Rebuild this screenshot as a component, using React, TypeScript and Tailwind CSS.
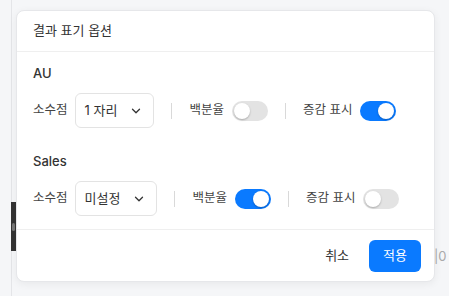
import React, { useState } from 'react';
import { ChevronDown } from 'lucide-react';

const FONT = 'font-[Inter,"Noto_Sans_CJK_KR",sans-serif]';

const Toggle: React.FC<{ on: boolean; onChange: () => void }> = ({ on, onChange }) => (
  <button
    onClick={onChange}
    className={`relative h-5 w-9 shrink-0 rounded-full transition-colors ${
      on ? 'bg-[#0a7aff]' : 'bg-[#e3e3e3]'
    }`}
  >
    <span
      className={`absolute top-[2px] h-4 w-4 rounded-full bg-white shadow-[0_1px_2px_rgba(0,0,0,0.25)] transition-all ${
        on ? 'left-[18px]' : 'left-[2px]'
      }`}
    />
  </button>
);

const Divider = () => <span className="mx-[17px] h-4 w-px bg-[#d9d9d9]" />;

interface RowState {
  name: string;
  decimal: string;
  percent: boolean;
  delta: boolean;
}

export default function App() {
  const [rows, setRows] = useState<RowState[]>([
    { name: 'AU', decimal: '1 자리', percent: false, delta: true },
    { name: 'Sales', decimal: '미설정', percent: true, delta: false },
  ]);

  const flip = (i: number, key: 'percent' | 'delta') =>
    setRows((prev) => prev.map((r, j) => (j === i ? { ...r, [key]: !r[key] } : r)));

  return (
    <div className={`relative h-[296px] w-[449px] overflow-hidden bg-[#f5f6f8] ${FONT}`}>
      {/* background page bits */}
      <div className="absolute left-[11px] top-0 h-full w-px bg-[#e4e5e8]" />
      <div className="absolute left-[11px] top-[202px] flex h-[49px] w-[6px] items-center bg-[#333333]">
        <span className="ml-[1px] h-2 w-[3px] rounded-sm bg-[#777]" />
      </div>
      <span className="absolute left-[434px] top-[247px] text-[13px] text-[#aaaaaa]">|0</span>

      {/* Dialog */}
      <div className="absolute left-[16px] top-[10px] w-[419px] rounded-lg border border-[#e6e7ea] bg-white shadow-[0_2px_8px_rgba(0,0,0,0.06)]">
        <div className="flex h-[41px] items-center border-b border-[#efefef] px-4 text-[13px] text-[#333]">
          결과 표기 옵션
        </div>

        <div className="px-4 pb-[13px] pt-[11px]">
          {rows.map((r, i) => (
            <div key={r.name} className={i > 0 ? 'mt-[23px]' : ''}>
              <div className="h-5 text-[13px] font-medium leading-5 text-[#333]">{r.name}</div>
              <div className="mt-2.5 flex h-[35px] items-center text-[12.5px] text-[#444]">
                <span>소수점</span>
                <button className="ml-[7px] flex h-[35px] items-center gap-3 rounded-md border border-[#e3e3e3] pl-[9px] pr-[10px] text-[13px] text-[#333]">
                  {r.decimal}
                  <ChevronDown className="h-[14px] w-[14px] text-[#333]" strokeWidth={2.2} />
                </button>
                <Divider />
                <span>백분율</span>
                <span className="ml-2 flex">
                  <Toggle on={r.percent} onChange={() => flip(i, 'percent')} />
                </span>
                <Divider />
                <span>증감 표시</span>
                <span className="ml-2 flex">
                  <Toggle on={r.delta} onChange={() => flip(i, 'delta')} />
                </span>
              </div>
            </div>
          ))}
        </div>

        <div className="flex items-center justify-end gap-2 border-t border-[#efefef] px-[13px] pb-[9px] pt-[10px]">
          <button className="h-8 px-3 text-[13px] text-[#333]">취소</button>
          <button className="h-8 rounded-md bg-[#0a7aff] px-[14px] text-[13px] text-white">적용</button>
        </div>
      </div>
    </div>
  );
}
